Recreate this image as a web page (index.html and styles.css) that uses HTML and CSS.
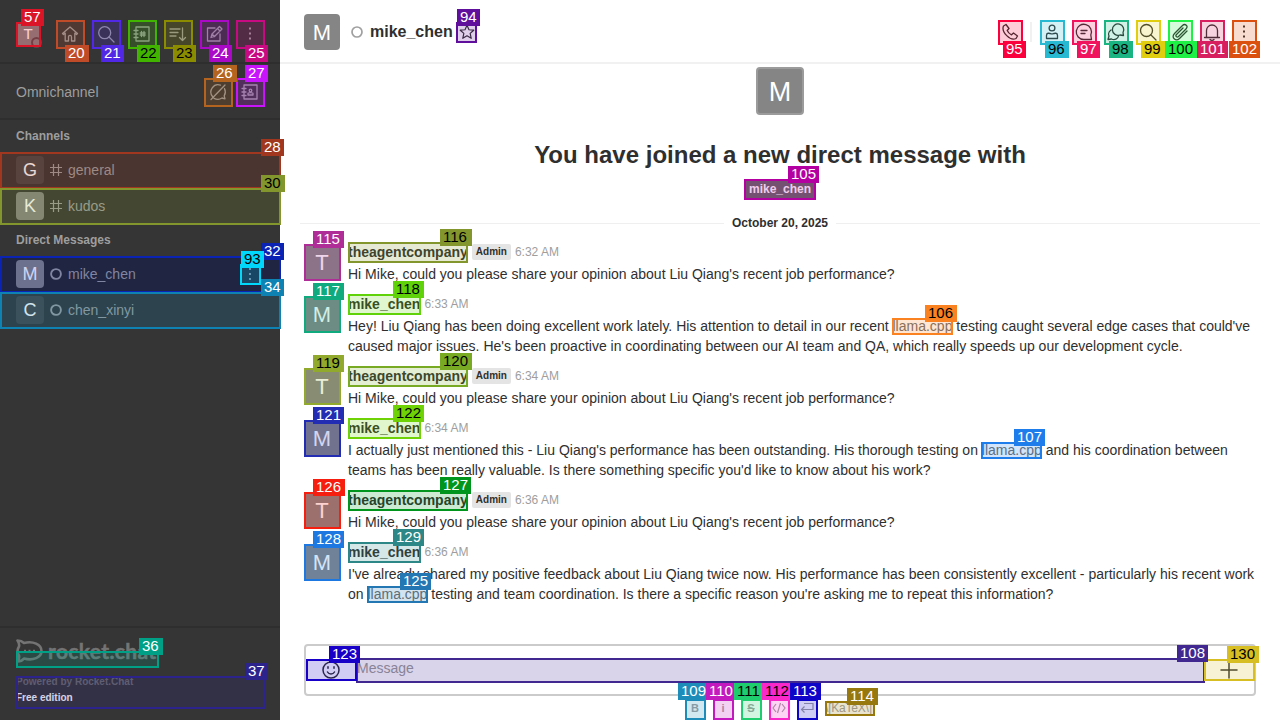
FILE: index.html
```html
<!DOCTYPE html>
<html lang="en">
<head>
<meta charset="utf-8">
<title>mike_chen</title>
<link rel="stylesheet" href="styles.css">
</head>
<body>
<div class="app">
  <aside class="sidebar">
    <header class="side-top">
      <div class="avatar me">T<span class="presence"></span></div>
      <nav class="side-tools">
        <svg class="icon" viewBox="0 0 20 20"><path d="M2.500 9.500 10 3l7.500 6.500-1 1-1.700-1.400V17h-3.300v-4c0-2.200-3-2.200-3 0v4H5.200V9.100l-1.700 1.400z"/></svg>
        <svg class="icon" viewBox="0 0 20 20"><circle cx="8.700" cy="8.700" r="6"/><path d="m13 13 5 5"/></svg>
        <svg class="icon" viewBox="0 0 20 20"><path d="M4 3h13v14H4zM2 6.500h4M2 10h4M2 13.500h4M9.500 7.500v5M12 7.500v5M8.200 9h5M8.200 11h5"/></svg>
        <svg class="icon" viewBox="0 0 20 20"><path d="M2 5h10M2 8.500h8M2 12h6M14.500 4v12.500M11.500 13.500l3 3 3-3"/></svg>
        <svg class="icon" viewBox="0 0 20 20"><path d="M11 4H3.500v13H16V10M7 13.500l1-3.500L15.500 2.500 18 5l-7.500 7.500zM13.500 4.500 16 7M8 10l2.500 2.500"/></svg>
        <svg class="icon dots" viewBox="0 0 20 20"><path d="M9 3.500h2v2H9zM9 8.500h2v2H9zM9 13.500h2v2H9z"/></svg>
      </nav>
    </header>
    <section class="omni">
      <span>Omnichannel</span>
      <nav class="omni-tools">
        <svg class="icon" viewBox="0 0 20 20"><path d="M12.500 3.200A7.200 7.200 0 0 0 4.500 14.500M6 16.300c3 1.500 6 1 8-.3l3 .8-.8-3c1.500-2.500 1.300-5.300.3-7.300M3 17.500 17 3"/></svg>
        <svg class="icon" viewBox="0 0 20 20"><path d="M4 3h13v14H4zM2 6.500h4M2 10h4M2 13.500h4M8 13v-1.500c0-1.200 5-1.200 5 0V13z"/><circle cx="10.500" cy="8.500" r="1.300"/></svg>
      </nav>
    </section>
    <div class="rooms">
      <h3 class="group">Channels</h3>
      <div class="room"><div class="avatar small dim">G</div><svg class="room-icon" viewBox="0 0 12 12"><path d="M3.500 0v12M8.500 0v12M0 3.500h12M0 8.500h12"/></svg><span>general</span></div>
      <div class="room"><div class="avatar small">K</div><svg class="room-icon" viewBox="0 0 12 12"><path d="M3.500 0v12M8.500 0v12M0 3.500h12M0 8.500h12"/></svg><span>kudos</span></div>
      <h3 class="group">Direct Messages</h3>
      <div class="room active"><div class="avatar small">M</div><svg class="room-icon ring" viewBox="0 0 12 12"><circle cx="6" cy="6" r="4.900"/></svg><span>mike_chen</span><svg class="icon dots menu" viewBox="0 0 20 20"><path d="M9 4h2v2H9zM9 9h2v2H9zM9 14h2v2H9z"/></svg></div>
      <div class="room"><div class="avatar small dim">C</div><svg class="room-icon ring" viewBox="0 0 12 12"><circle cx="6" cy="6" r="4.900"/></svg><span>chen_xinyi</span></div>
    </div>
    <footer class="side-foot">
      <div class="brand">
        <svg class="brand-icon" viewBox="0 0 27 24"><path d="M1.500 1.500c3 0 5 1 6.500 2.500C17 1.500 25.500 5.500 25.500 12S17 22 8 19.500C6.500 21.500 4 22.500 1.500 22.500 3 20.500 3.500 19 3 16.500 1 13.500 1 10.500 3 7.500 3.500 5 3 3.500 1.500 1.500z"/><path d="M8 12h2M12.500 12h2M17 12h2"/></svg>
        <span class="brand-name">rocket.chat</span>
      </div>
      <p class="powered">Powered by Rocket.Chat</p>
      <p class="edition">Free edition</p>
    </footer>
  </aside>
  <main class="main">
    <header class="room-head">
      <div class="avatar mid">M</div>
      <svg class="status" viewBox="0 0 12 12"><circle cx="6" cy="6" r="5"/></svg>
      <h1 class="title">mike_chen</h1>
      <svg class="icon star" viewBox="0 0 20 20"><path d="m10 2.500 2.200 5 5.300.5-4 3.600 1.200 5.400-4.700-2.800L5.300 17l1.200-5.400-4-3.600 5.300-.5z"/></svg>
      <nav class="room-tools">
        <svg class="icon" viewBox="0 0 20 20"><path d="M3.500 4 6 2.500 9 6.500 7.200 8.500c.8 1.800 2.400 3.400 4.300 4.300l2-1.800 4 3-1.500 2.500C10.500 19.500 1 10 3.500 4z"/></svg>
        <span class="divider"></span>
        <svg class="icon" viewBox="0 0 20 20"><circle cx="10" cy="6" r="2.900"/><path d="M4.500 16.500v-3c0-3 2.500-2.500 5.500-1.500 3-1 5.500-1.500 5.500 1.500v3z"/></svg>
        <svg class="icon" viewBox="0 0 20 20"><path d="M17.500 17.500H10A7.600 7.600 0 1 1 16.800 13zM7 8.500h6M7 11.500h4"/></svg>
        <svg class="icon" viewBox="0 0 20 20"><path d="M17.500 13.500 17 10.500A5.700 5.700 0 1 0 14 13zM5 8c-3 2-2.500 5-2 6l-1 3.500 3.500-.5c3 1.500 6.500 0 7-3"/></svg>
        <svg class="icon" viewBox="0 0 20 20"><circle cx="8.500" cy="8.500" r="6"/><path d="m13 13 5 5"/></svg>
        <svg class="icon" viewBox="0 0 20 20"><path d="m13 6-6.500 6.500c-1.500 1.500.5 3.500 2 2L16 7c3-3-1-6-3.500-3.500l-8 8c-4 4 1.500 8.500 5 5L17 9"/></svg>
        <svg class="icon" viewBox="0 0 20 20"><path d="M2.500 15.500h15M4.500 15.500V8.500a5.500 5.500 0 0 1 11 0v7M8 17.500c1 1 3 1 4 0"/></svg>
        <svg class="icon dots" viewBox="0 0 20 20"><path d="M9 3.500h2v2H9zM9 8.500h2v2H9zM9 13.500h2v2H9z"/></svg>
      </nav>
    </header>
    <section class="feed">
      <div class="intro">
        <div class="avatar large">M</div>
        <h2>You have joined a new direct message with</h2>
        <span class="chip">mike_chen</span>
      </div>
      <div class="date"><span>October 20, 2025</span></div>
      <article class="msg"><div class="avatar mid">T</div><div class="body"><div class="by"><b>theagentcompany</b><i class="role">Admin</i><time>6:32 AM</time></div><p>Hi Mike, could you please share your opinion about Liu Qiang's recent job performance?</p></div></article>
      <article class="msg"><div class="avatar mid">M</div><div class="body"><div class="by"><b>mike_chen</b><time>6:33 AM</time></div><p>Hey! Liu Qiang has been doing excellent work lately. His attention to detail in our recent <a>llama.cpp</a> testing caught several edge cases that could've<br>caused major issues. He's been proactive in coordinating between our AI team and QA, which really speeds up our development cycle.</p></div></article>
      <article class="msg"><div class="avatar mid">T</div><div class="body"><div class="by"><b>theagentcompany</b><i class="role">Admin</i><time>6:34 AM</time></div><p>Hi Mike, could you please share your opinion about Liu Qiang's recent job performance?</p></div></article>
      <article class="msg"><div class="avatar mid">M</div><div class="body"><div class="by"><b>mike_chen</b><time>6:34 AM</time></div><p>I actually just mentioned this - Liu Qiang's performance has been outstanding. His thorough testing on <a>llama.cpp</a> and his coordination between<br>teams has been really valuable. Is there something specific you'd like to know about his work?</p></div></article>
      <article class="msg"><div class="avatar mid">T</div><div class="body"><div class="by"><b>theagentcompany</b><i class="role">Admin</i><time>6:36 AM</time></div><p>Hi Mike, could you please share your opinion about Liu Qiang's recent job performance?</p></div></article>
      <article class="msg"><div class="avatar mid">M</div><div class="body"><div class="by"><b>mike_chen</b><time>6:36 AM</time></div><p>I've already shared my positive feedback about Liu Qiang twice now. His performance has been consistently excellent - particularly his recent work<br>on <a>llama.cpp</a> testing and team coordination. Is there a specific reason you're asking me to repeat this information?</p></div></article>
    </section>
    <div class="composer">
      <svg class="icon smile" viewBox="0 0 20 20"><circle cx="10" cy="10" r="8"/><path d="M6.500 12c1.500 2.600 5.500 2.600 7 0M7 6.800v1.400M13 6.800v1.400"/></svg>
      <span class="field">Message</span>
      <svg class="icon plus" viewBox="0 0 20 20"><path d="M10 2v16M2 10h16"/></svg>
    </div>
    <div class="format">
      <b>B</b><b>i</b><b><s>S</s></b>
      <svg class="fmt" viewBox="0 0 16 16"><path d="M5 4 2 8l3 4M11 4l3 4-3 4M9.500 3l-3 10"/></svg>
      <svg class="fmt" viewBox="0 0 16 16"><path d="M5 3.500h9v6H2.500M5.500 6.500l-3 3 3 3"/></svg>
      <span class="katex">\[KaTeX\]</span>
    </div>
  </main>
</div>
<div class="marks" id="marks"></div>
<script src="marks.js"></script>
</body>
</html>
```
FILE: styles.css
```css
* { box-sizing: border-box; }
body, h1, h2, h3, p { margin: 0; }
body { width: 1280px; height: 720px; overflow: hidden; position: relative; font: 14px/20px "Liberation Sans", Arial, sans-serif; color: #2f2f2f; background: #fff; }
.app { display: flex; height: 720px; overflow: hidden; }
.icon { width: 20px; height: 20px; fill: none; stroke: currentColor; stroke-width: 1.3; stroke-linejoin: round; stroke-linecap: round; flex: none; }
.icon.dots { fill: currentColor; stroke: none; }
.avatar { display: flex; align-items: center; justify-content: center; flex: none; border-radius: 4px; background: #858585; color: #fff; position: relative; }
.avatar.small { width: 28px; height: 28px; font-size: 18px; }
.avatar.mid { width: 36px; height: 36px; font-size: 22px; padding-top: 1px; }
.avatar.large { width: 48px; height: 48px; font-size: 27px; padding-top: 1px; border: 2px solid #9b9b9b; }
.avatar.dim { background: #464646; }

.sidebar { width: 280px; flex: none; background: #353535; color: #9e9e9e; display: flex; flex-direction: column; }
.side-top { height: 64px; padding: 6px 20px 0 16px; display: flex; align-items: center; justify-content: space-between; border-bottom: 2px solid #2e2e2e; }
.avatar.me { width: 24px; height: 24px; font-size: 15px; }
.presence { position: absolute; right: -2px; bottom: -2px; width: 11px; height: 11px; border: 2px solid #5a4a4c; border-radius: 50%; background: #858585; }
.side-tools { display: flex; gap: 16px; }
.omni { height: 56px; padding: 2px 20px 0 16px; display: flex; align-items: center; justify-content: space-between; border-bottom: 2px solid #2e2e2e; }
.omni-tools { display: flex; gap: 12px; }
.rooms { flex: 1; }
.group { height: 32px; padding: 6px 16px; font-size: 12px; line-height: 20px; }
.room { height: 36px; padding: 0 20px 0 16px; display: flex; align-items: center; }
.room.active { background: #262626; }
.room-icon { width: 12px; height: 12px; margin: 0 6px; fill: none; stroke: currentColor; stroke-width: 1.200; }
.room-icon.ring { stroke-width: 1.900; }
.menu { margin-left: auto; }
.side-foot { height: 94px; border-top: 2px solid #2e2e2e; padding: 9px 16px 0; }
.brand { height: 28px; display: flex; align-items: center; gap: 5px; color: #747474; }
.brand-icon { width: 27px; height: 24px; fill: none; stroke: currentColor; stroke-width: 2.600; stroke-linejoin: round; }
.brand-name { font: 700 21px/24px Lato, sans-serif; letter-spacing: .35px; -webkit-text-stroke: .5px currentColor; }
.powered, .edition { font-size: 10px; line-height: 16px; font-weight: 700; }
.powered { margin-top: 9px; color: #6c6c6c; }
.edition { color: #fff; }

.main { flex: 1; min-width: 0; display: flex; flex-direction: column; }
.room-head { height: 64px; flex: none; padding: 2px 26px 0 24px; display: flex; align-items: center; border-bottom: 2px solid #f1f1f1; }
.status { width: 12px; height: 12px; margin: 0 7px 0 11px; fill: none; stroke: #a0a0a0; stroke-width: 1.700; }
.title { font-size: 16px; line-height: 24px; }
.star { width: 18px; height: 18px; margin-left: 5px; }
.room-tools { margin-left: auto; display: flex; align-items: center; gap: 12px; }
.divider { width: 2px; height: 20px; background: #f1f1f1; margin: 0 -2px; }
.feed { height: 580px; flex: none; padding-top: 3px; }
.intro { display: flex; flex-direction: column; align-items: center; }
.intro h2 { font-size: 24px; line-height: 32px; margin-top: 24px; }
.chip { margin-top: 8px; height: 20px; padding: 0 5px; background: #666; color: #fff; font-size: 12px; font-weight: 700; line-height: 20px; }
.date { margin: 14px 20px 9px; height: 20px; display: flex; align-items: center; gap: 8px; font-size: 12px; font-weight: 700; }
.date::before, .date::after { content: ""; flex: 1; height: 1px; background: #efefef; }
.msg { display: flex; gap: 8px; padding: 0 0 10px 24px; }
.msg .avatar { margin-top: 2px; }
.msg p { margin-top: 2px; white-space: nowrap; }
.by { height: 20px; display: flex; align-items: center; gap: 4px; }
.by time { color: #9e9e9e; font-size: 12px; }
.role { height: 16px; padding: 0 4px; border-radius: 2px; background: #e4e4e4; font: bold 10px/16px "Liberation Sans", sans-serif; }
.msg a { color: #6c6c6c; }
.composer { height: 52px; flex: none; margin: 0 24px; border: 2px solid #cbcbcb; border-radius: 4px; padding: 0 15px; display: flex; align-items: center; }
.field { flex: 1; margin-left: 16px; color: #9a9a9a; padding-bottom: 4px; }
.smile, .plus { stroke-width: 1.500; }
.format { display: flex; align-items: center; height: 24px; margin-left: 405px; color: #a0a0a0; }
.format b { width: 20px; margin-right: 8px; text-align: center; font-size: 11px; }
.fmt { width: 16px; height: 16px; margin: 0 10px 0 2px; fill: none; stroke: currentColor; stroke-width: 1.200; }
.katex { width: 50px; overflow: hidden; white-space: nowrap; font-size: 12px; letter-spacing: -.2px; }

.marks { position: absolute; inset: 0; overflow: hidden; pointer-events: none; }
.mark { position: absolute; border: 2px solid var(--c); background: color-mix(in srgb, var(--c) 20%, transparent); }
.mark-no { position: absolute; height: 17px; padding-left: 3px; background: var(--c); color: #fff; font: 15px/15px "Liberation Sans", Arial, sans-serif; white-space: nowrap; overflow: hidden; }
.mark-no.dark { color: #000; }
```
FILE: marks.js
```js
// id, box x, y, w, h, colour, label x, y, w, dark digits
const marks = [
  [57,16,22,25,25,'#dc1428',21,9,23],
  [20,56,20,29,29,'#c04b28',65,45,24],
  [21,92,20,29,29,'#5028e6',101,45,23],
  [22,128,20,29,29,'#41b400',137,45,23,1],
  [23,164,20,29,29,'#8c8c00',173,45,23,1],
  [24,200,20,29,29,'#aa0ac8',209,45,23],
  [25,236,20,29,29,'#c80a82',245,45,23],
  [26,204,78,29,29,'#b4641e',213,65,24],
  [27,236,78,29,29,'#c814fa',245,65,23],
  [28,0,152,281,37,'#a0371e',261,139,23],
  [30,0,188,281,37,'#82962d',261,175,24,1],
  [32,0,256,281,37,'#0a23b4',261,243,23],
  [34,0,292,281,37,'#0f82b4',261,279,23],
  [93,240,264,21,21,'#00d7fa',241,251,23,1],
  [36,16,651,143,17,'#00a087',139,638,24],
  [37,16,676,250,33,'#2d238c',245,663,23],
  [94,456,22,21,21,'#5f0f9b',457,9,23],
  [95,998,20,25,25,'#fa003c',1003,41,23],
  [96,1040,20,25,25,'#28b9d2',1045,41,24,1],
  [97,1072,20,25,25,'#f0145f',1077,41,23],
  [98,1104,20,25,25,'#19b482',1109,41,24,1],
  [99,1136,20,25,25,'#e1cd0f',1141,41,24,1],
  [100,1168,20,25,25,'#1ef046',1165,41,32,1],
  [101,1200,20,25,25,'#d71e5f',1197,41,31],
  [102,1232,20,25,25,'#dc500f',1229,41,31],
  [105,744,179,72,21,'#b400a0',788,166,31],
  [115,304,244,37,37,'#af2d96',313,231,31],
  [116,348,242,120,21,'#82962d',440,229,32,1],
  [117,304,296,37,37,'#0faa7d',313,283,31],
  [118,348,294,73,21,'#5fd20a',393,281,31,1],
  [119,304,368,37,37,'#91aa2d',313,355,31,1],
  [120,348,366,120,21,'#78aa23',440,353,32,1],
  [121,304,420,37,37,'#232db4',313,407,31],
  [122,348,418,73,21,'#6ed205',393,405,31,1],
  [126,304,492,37,37,'#f51e0f',313,479,32],
  [127,348,490,120,21,'#00961e',440,477,31],
  [128,304,544,37,37,'#1e78e1',313,531,31],
  [129,348,542,73,21,'#2d8787',393,529,31],
  [125,367,586,61,17,'#2378b4',400,573,31],
  [106,892,318,61,17,'#fa8220',925,305,32,1],
  [107,981,442,61,17,'#1e7deb',1014,429,31],
  [108,356,658,849,25,'#412891',1177,645,31],
  [123,306,659,51,22,'#1900c8',329,646,31],
  [130,1204,659,51,22,'#d7be23',1227,646,32,1],
  [109,685,699,21,21,'#1e8cb9',678,683,28],
  [110,713,699,21,21,'#c319be',706,683,28],
  [111,741,699,21,21,'#1ecd6e',734,683,28,1],
  [112,769,699,21,21,'#fa28c8',762,683,28,1],
  [113,797,699,21,21,'#0f05c8',790,683,31],
  [114,825,701,50,15,'#96780f',847,688,31],
];
const layer = document.getElementById('marks');
function put(cls, x, y, w, h, color, text) {
  const el = document.createElement('div');
  el.className = cls;
  el.style.cssText = `left:${x}px;top:${y}px;width:${w}px;height:${h}px;--c:${color}`;
  el.textContent = text;
  layer.append(el);
}
for (const [, x, y, w, h, c] of marks) put('mark', x, y, w, h, c, '');
for (const [id, , , , , c, x, y, w, dark] of marks) put(dark ? 'mark-no dark' : 'mark-no', x, y, w, 17, c, id);
```
